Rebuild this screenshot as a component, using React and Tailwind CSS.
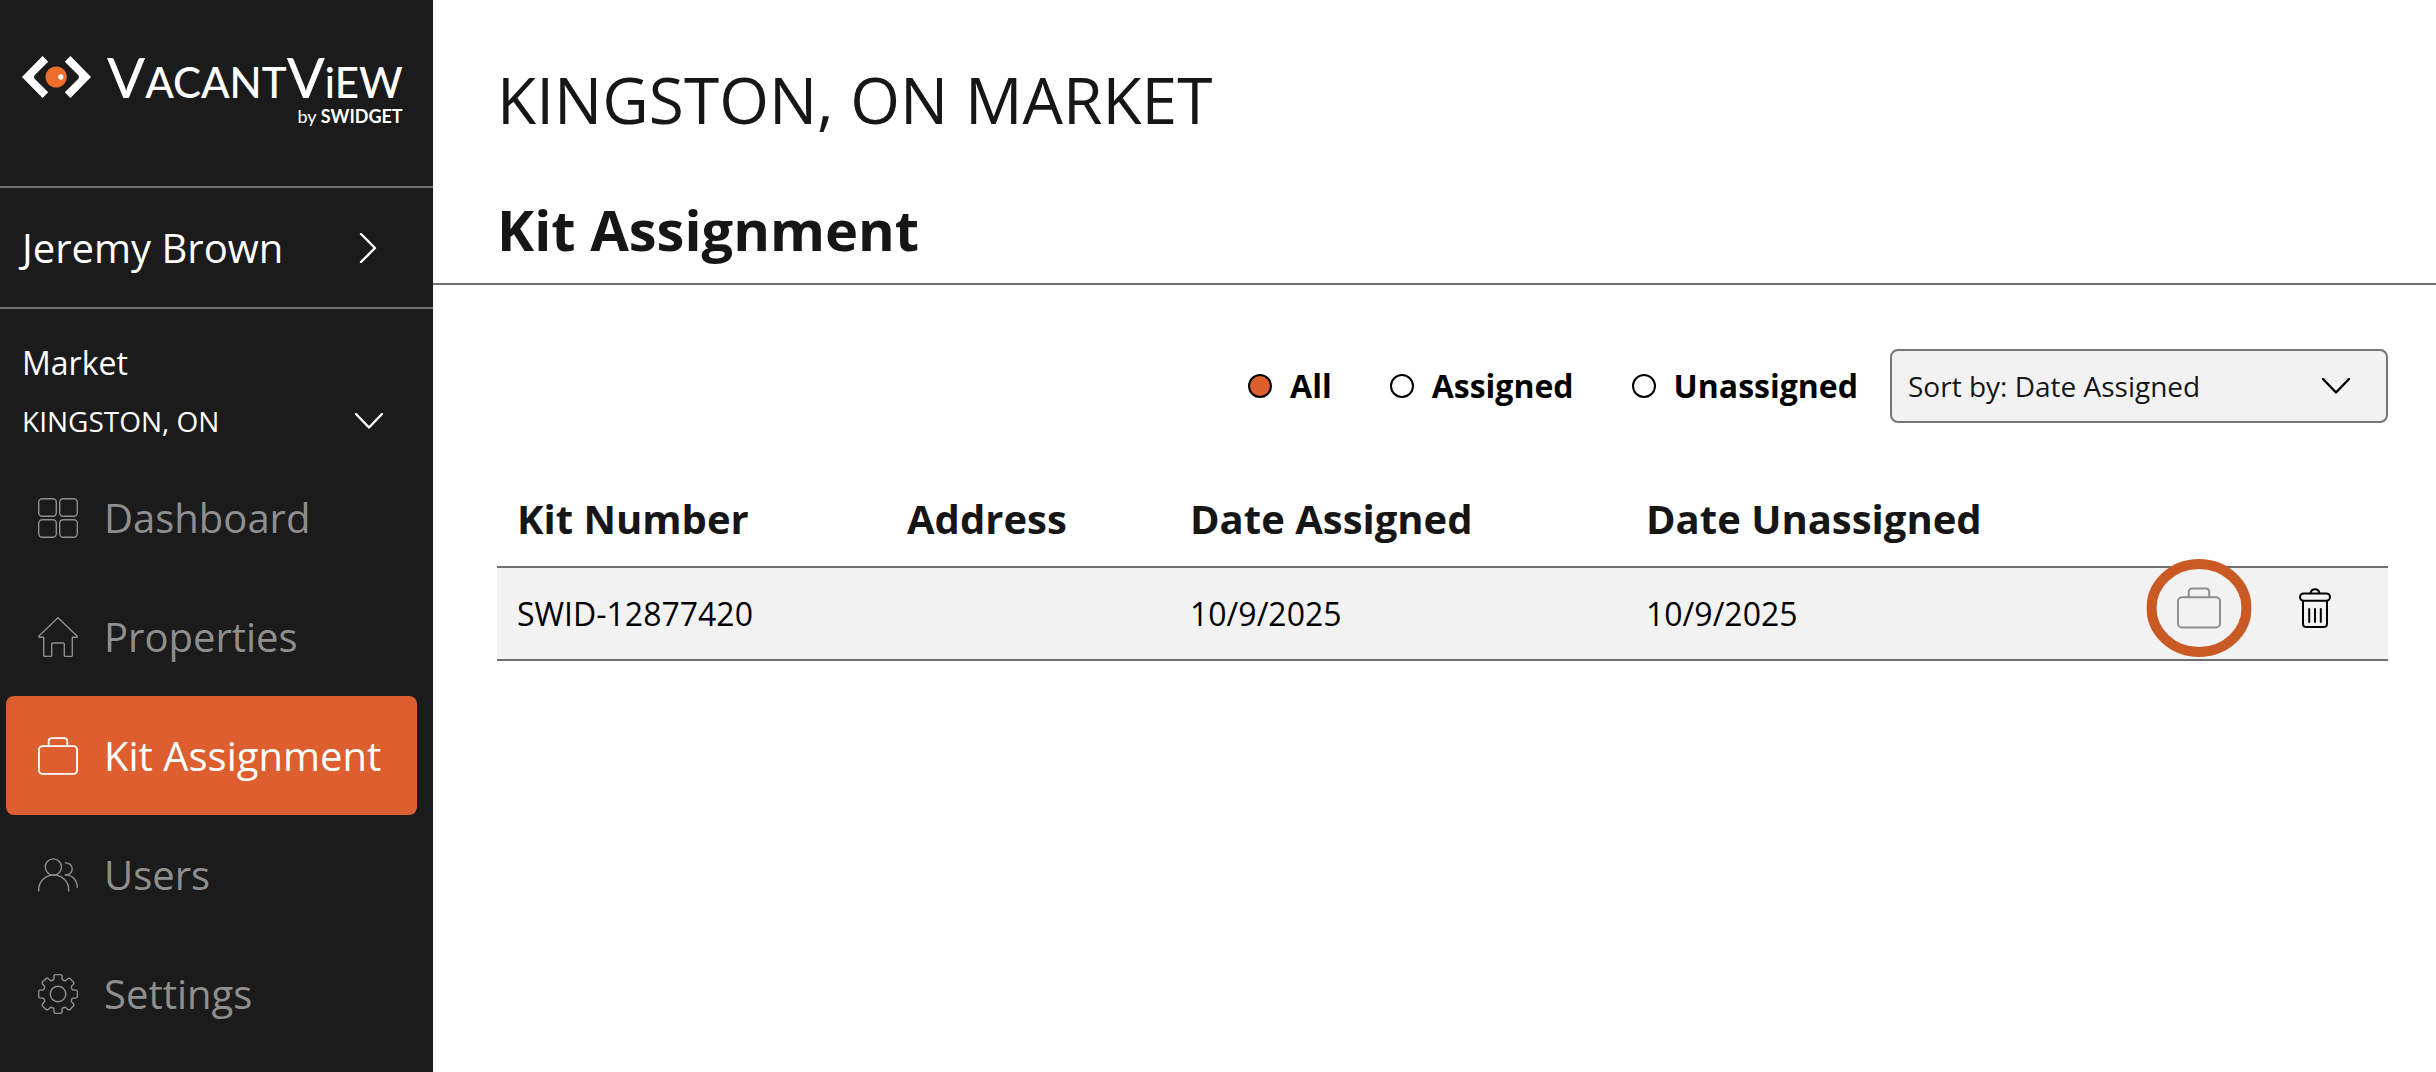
import React, { useState } from 'react';

const GEAR_TOOTH = [
    [-5.4, -13.6],
    [-4.2, -14.6],
    [-3.9, -18.4],
    [-2.8, -19.4],
    [2.8, -19.4],
    [3.9, -18.4],
    [4.2, -14.6],
    [5.4, -13.6],
];

const gearPoints = [0, 45, 90, 135, 180, 225, 270, 315]
    .flatMap((deg) => {
        const a = (deg * Math.PI) / 180;
        return GEAR_TOOTH.map(([x, y]) => {
            const px = 20 + x * Math.cos(a) - y * Math.sin(a);
            const py = 20 + x * Math.sin(a) + y * Math.cos(a);
            return `${px.toFixed(2)},${py.toFixed(2)}`;
        });
    })
    .join(' ');

function Icon({ children, className = 'size-10', strokeWidth = 1.4, viewBox = '0 0 40 40' }) {
    return (
        <svg
            className={`shrink-0 ${className}`}
            viewBox={viewBox}
            fill="none"
            stroke="currentColor"
            strokeWidth={strokeWidth}
            strokeLinecap="round"
            strokeLinejoin="round"
            aria-hidden="true"
        >
            {children}
        </svg>
    );
}

function DashboardIcon() {
    return (
        <Icon>
            <rect x="0.7" y="0.7" width="17.6" height="17.6" rx="3.5" />
            <rect x="21.7" y="0.7" width="17.6" height="17.6" rx="3.5" />
            <rect x="0.7" y="21.7" width="17.6" height="17.6" rx="3.5" />
            <rect x="21.7" y="21.7" width="17.6" height="17.6" rx="3.5" />
        </Icon>
    );
}

function HomeIcon() {
    return (
        <Icon>
            <path d="M20 .7.9 19q-.6 1.2.7 1.3h4.1v18q0 1.1 1.1 1.1h5.8q1.1 0 1.1-1.1V27.2q0-1.2 1.2-1.2h10.2q1.2 0 1.2 1.2v11.1q0 1.1 1.1 1.1h5.8q1.1 0 1.1-1.1v-18h4.1q1.3-.1.7-1.3Z" />
        </Icon>
    );
}

function BriefcaseIcon({ className, strokeWidth = 1.8 }) {
    return (
        <Icon className={className} strokeWidth={strokeWidth}>
            <rect x="0.9" y="10.2" width="38.2" height="27.6" rx="3.6" />
            <path d="M10.7 10.2V5.4q0-3.2 3.2-3.2h12.2q3.2 0 3.2 3.2v4.8" />
        </Icon>
    );
}

function UsersIcon() {
    return (
        <Icon>
            <circle cx="15.4" cy="12" r="8.1" />
            <path d="M.7 36v-1.2a15 14.8 0 0 1 30 0V36" />
            <path d="M27.4 7.9c4-.2 6.8 2.7 6.8 6s-2.8 6.2-6.8 6" />
            <path d="M27.4 19.9c6.8-.2 11.9 5.4 11.9 12.4" />
        </Icon>
    );
}

function SettingsIcon() {
    return (
        <Icon>
            <polygon points={gearPoints} />
            <circle cx="20" cy="20" r="7.8" />
        </Icon>
    );
}

function TrashIcon() {
    return (
        <Icon className="h-10 w-8" viewBox="0 0 32 40" strokeWidth={2}>
            <path d="M11.6 5.2C12 2.5 13.7 1.2 16 1.2s4 1.3 4.4 4" />
            <rect x="1" y="5.4" width="30" height="7.4" rx="3.7" />
            <path d="M4 13v22.4Q4 39 7.6 39h16.8q3.6 0 3.6-3.6V13" />
            <path d="M10.2 21v13M16 21v13M21.8 21v13" />
        </Icon>
    );
}

function ChevronDown({ className }) {
    return (
        <Icon className={`h-4 w-7 ${className}`} viewBox="0 0 28 16" strokeWidth={2.4}>
            <path d="m1 1 13 13.5L27 1" />
        </Icon>
    );
}

function Logo() {
    return (
        <a href="#" className="flex items-start text-white font-[Lato,sans-serif]">
            <svg className="mt-[3px] h-[42px] w-[69px]" viewBox="0 0 208 126" aria-hidden="true">
                <path d="M0 63 62 0l17 17-41 41q-4 5 0 10l41 41-17 17Z" fill="#fff" />
                <path d="m208 63-62-63-17 17 41 41q4 5 0 10l-41 41 17 17Z" fill="#fff" />
                <circle cx="103" cy="63" r="32" fill="#ee6f2d" />
                <circle cx="117" cy="63" r="8" fill="#fff" />
            </svg>
            <span className="ml-4 flex flex-col items-end">
                <span className="text-[42px] leading-[48px] font-medium whitespace-nowrap">
                    <span className="text-[56px]">V</span>ACANT<span className="text-[56px]">V</span>iEW
                </span>
                <span className="text-lg leading-5 whitespace-nowrap">
                    by <span className="font-bold">SWIDGET</span>
                </span>
            </span>
        </a>
    );
}

const navItems = [
    { name: 'Dashboard', icon: DashboardIcon },
    { name: 'Properties', icon: HomeIcon },
    { name: 'Kit Assignment', icon: BriefcaseIcon },
    { name: 'Users', icon: UsersIcon },
    { name: 'Settings', icon: SettingsIcon },
];

function Sidebar() {
    return (
        <aside className="w-[433px] shrink-0 bg-[#1b1b1b] text-white">
            <div className="h-[188px] border-b-2 border-[#706e6e] px-[22px] pt-[53px]">
                <Logo />
            </div>
            <button
                type="button"
                className="flex h-[121px] w-full items-center justify-between border-b-2 border-[#706e6e] pr-14 pl-[22px] text-[40px]"
            >
                Jeremy Brown
                <Icon className="h-[30px] w-[18px]" viewBox="0 0 18 30" strokeWidth={2.4}>
                    <path d="m2 1 14 14L2 29" />
                </Icon>
            </button>
            <div className="px-[22px] pt-[34px]">
                <label htmlFor="market" className="block text-[32px] leading-10">
                    Market
                </label>
                <div className="relative mt-[18px] flex items-center">
                    <select id="market" className="h-10 w-full appearance-none bg-transparent text-[28px] leading-10">
                        <option>KINGSTON, ON</option>
                    </select>
                    <ChevronDown className="pointer-events-none absolute right-7" />
                </div>
            </div>
            <nav className="mt-[17px] pr-4 pl-[6px]">
                {navItems.map(({ name, icon: NavIcon }) => {
                    const active = name === 'Kit Assignment';
                    return (
                        <a
                            key={name}
                            href="#"
                            aria-current={active ? 'page' : undefined}
                            className={`flex h-[119px] items-center gap-[26px] rounded-lg pl-8 text-[40px] ${
                                active ? 'bg-[#dd5e2e] text-white' : 'text-[#8f8f8f]'
                            }`}
                        >
                            <NavIcon />
                            {name}
                        </a>
                    );
                })}
            </nav>
        </aside>
    );
}

function Filters({ filter, setFilter }) {
    return (
        <div className="flex items-center justify-end gap-8">
            <fieldset className="flex items-center gap-[58px]">
                {['All', 'Assigned', 'Unassigned'].map((option) => (
                    <label key={option} className="flex items-center gap-[18px] text-[32px] font-bold text-black">
                        <input
                            type="radio"
                            name="filter"
                            value={option}
                            checked={filter === option}
                            onChange={() => setFilter(option)}
                            className="size-6 appearance-none rounded-full border-2 border-black bg-white checked:bg-[#dd5e2e]"
                        />
                        {option}
                    </label>
                ))}
            </fieldset>
            <div className="relative flex w-[498px] items-center">
                <select
                    aria-label="Sort by"
                    className="h-[74px] w-full appearance-none rounded-lg border-2 border-[#757575] bg-[#f2f2f2] pl-4 text-[28px]"
                >
                    <option>Sort by: Date Assigned</option>
                </select>
                <ChevronDown className="pointer-events-none absolute right-[38px] text-black" />
            </div>
        </div>
    );
}

const kits = [
    { id: 'SWID-12877420', address: '', assigned: '10/9/2025', unassigned: '10/9/2025' },
];

function KitTable() {
    return (
        <table className="mt-12 w-full table-fixed text-left">
            <thead>
                <tr className="border-b-2 border-[#706f6f] text-[40px] leading-[55px]">
                    <th className="w-[390px] px-5 py-5">Kit Number</th>
                    <th className="w-[283px] px-5 py-5">Address</th>
                    <th className="w-[456px] px-5 py-5">Date Assigned</th>
                    <th className="w-[456px] px-5 py-5">Date Unassigned</th>
                    <th aria-label="Actions"></th>
                </tr>
            </thead>
            <tbody>
                {kits.map((kit) => (
                    <tr key={kit.id} className="h-[93px] border-b-2 border-[#706f6f] bg-[#f2f2f2] text-[32px] text-black">
                        <td className="px-5">{kit.id}</td>
                        <td className="px-5">{kit.address}</td>
                        <td className="px-5">{kit.assigned}</td>
                        <td className="px-5">{kit.unassigned}</td>
                        <td className="pt-[18px] pr-[57px] align-top">
                            <div className="flex items-center justify-end gap-[78px]">
                                <button type="button" aria-label="Assign kit" className="relative text-[#8f8f8f]">
                                    <BriefcaseIcon className="size-11" />
                                    <svg
                                        className="pointer-events-none absolute top-1/2 left-1/2 h-[98px] w-[105px] max-w-none -translate-1/2"
                                        viewBox="0 0 105 98"
                                        aria-hidden="true"
                                    >
                                        <ellipse cx="52.5" cy="49" rx="47.5" ry="44" fill="none" stroke="#c95a24" strokeWidth="10" />
                                    </svg>
                                </button>
                                <button type="button" aria-label="Delete kit">
                                    <TrashIcon />
                                </button>
                            </div>
                        </td>
                    </tr>
                ))}
            </tbody>
        </table>
    );
}

function App() {
    const [filter, setFilter] = useState('All');

    return (
        <div className="flex min-h-screen bg-white text-[#161616] font-['Open_Sans',sans-serif]">
            <Sidebar />
            <main className="min-w-0 flex-1">
                <header className="border-b-2 border-[#706f6f] pt-[60px] pb-[18px] pl-16">
                    <h1 className="text-[64px] leading-[80px]">KINGSTON, ON MARKET</h1>
                    <h2 className="mt-[53px] text-[56px] leading-[72px] font-bold">Kit Assignment</h2>
                </header>
                <section className="pt-16 pr-12 pl-16">
                    <Filters filter={filter} setFilter={setFilter} />
                    <KitTable />
                </section>
            </main>
        </div>
    );
}

export default App;
